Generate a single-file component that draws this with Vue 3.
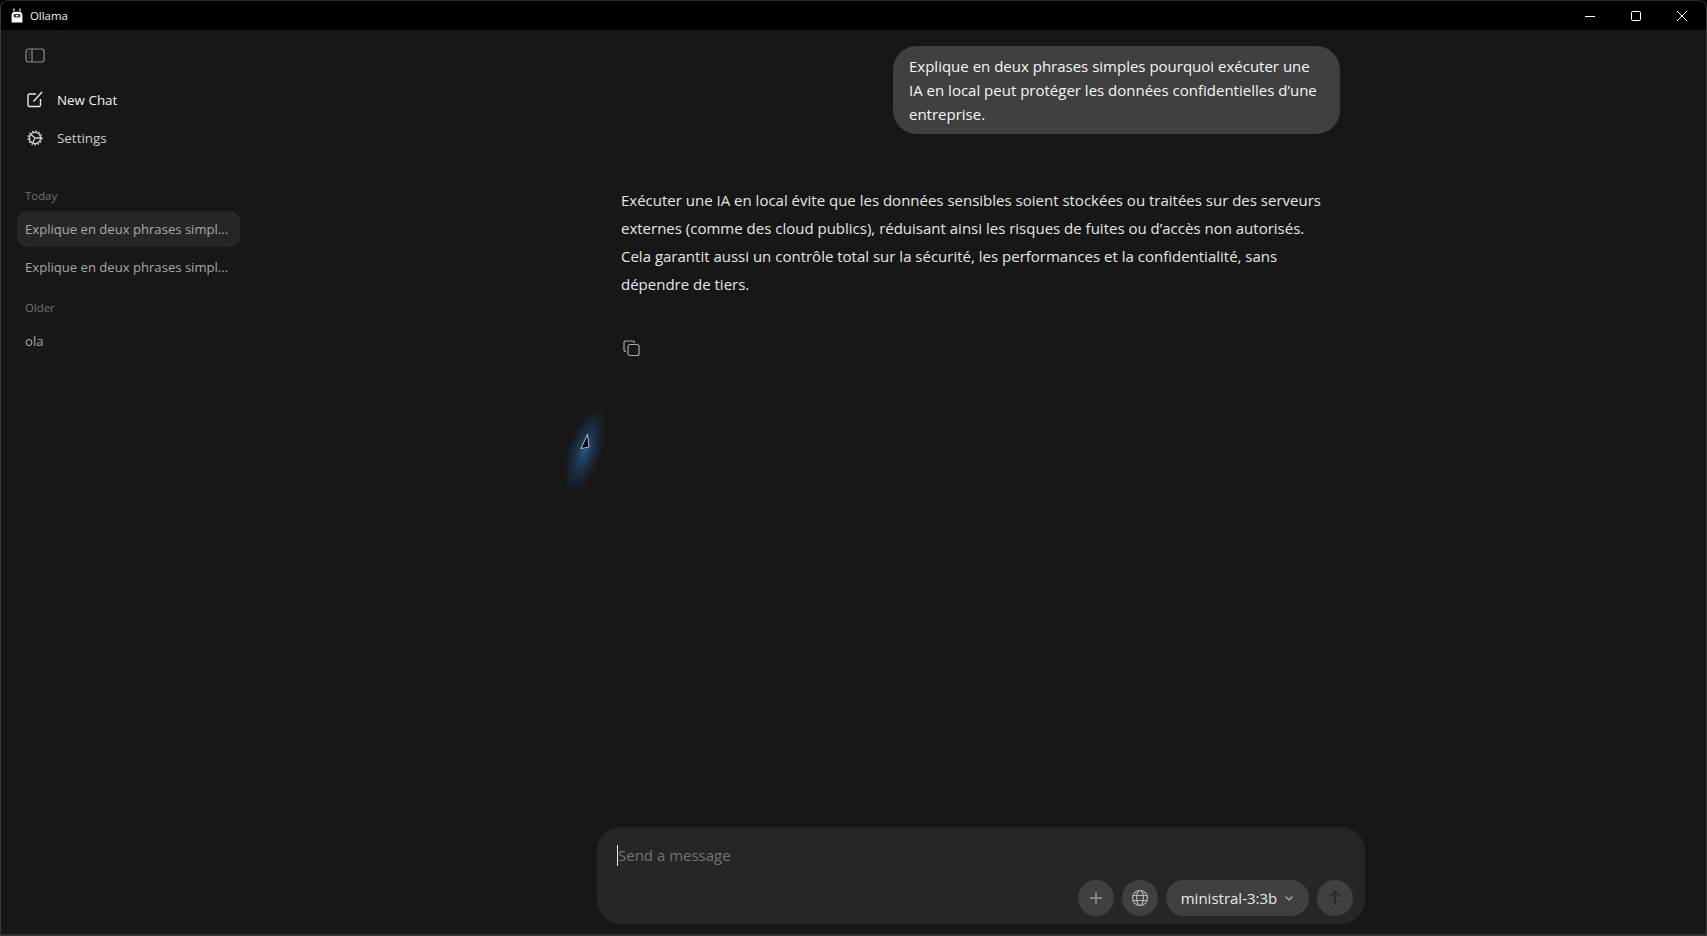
<script setup>
const history = [
  { label: 'Today', items: [
    { title: 'Explique en deux phrases simpl...', active: true },
    { title: 'Explique en deux phrases simpl...', active: false }
  ] },
  { label: 'Older', items: [{ title: 'ola', active: false }] }
];
</script>

<template>
  <div class="window">
    <header class="titlebar">
      <div class="app-name">
        <svg class="llama" width="12" height="15" viewBox="0 0 12 15">
          <path d="M2.400 0.500H3.400L3.600 3H2.400ZM8.600 0.500H9.600V3H8.400Z" fill="#fff" />
          <path d="M2.200 3.800H9.800L10.600 5Q11.800 6.500 11.400 8V14.500H0.600V8Q0.200 6.500 1.400 5Z" fill="#fff" />
          <rect x="2.400" y="6" width="7.200" height="3.400" rx="1.600" fill="#333" />
          <rect x="4.800" y="7" width="2.400" height="1.400" fill="#fff" />
        </svg>
        <span>Ollama</span>
      </div>
      <div class="win-controls">
        <svg width="10" height="10" viewBox="0 0 10 10"><path d="M0 5.500H10" stroke="#fff" stroke-width="1" /></svg>
        <svg width="10" height="10" viewBox="0 0 10 10"><rect x="0.500" y="0.500" width="9" height="9" rx="1" fill="none" stroke="#fff" stroke-width="1" /></svg>
        <svg width="10" height="10" viewBox="0 0 10 10"><path d="M0 0L10 10M10 0L0 10" stroke="#fff" stroke-width="1" /></svg>
      </div>
    </header>

    <div class="body">
      <aside class="sidebar">
        <button class="toggle">
          <svg width="20" height="15" viewBox="0 0 20 15" fill="none" stroke="#8e8e8e" stroke-width="1.200">
            <rect x="1" y="1" width="18" height="13" rx="2.500" />
            <path d="M7 1V14" />
            <path d="M3.600 4H4.600M3.600 7H4.600M3.600 10H4.600" />
          </svg>
        </button>
        <nav class="nav">
          <div class="nav-row new-chat">
            <svg width="18" height="18" viewBox="0 0 18 18" fill="none" stroke="#e8e8e8" stroke-width="1.400">
              <path d="M10 3H3.500A1.500 1.500 0 0 0 2 4.500V14A1.500 1.500 0 0 0 3.500 15.500H13A1.500 1.500 0 0 0 14.500 14V8" />
              <path d="M7.500 10.500L16 1" />
            </svg>
            <span>New Chat</span>
          </div>
          <div class="nav-row settings">
            <svg width="18" height="18" viewBox="0 0 18 18" fill="none" stroke="#cfcfcf" stroke-width="1.300">
              <circle cx="9" cy="9" r="5.600" />
              <circle cx="9" cy="9" r="6.800" stroke-dasharray="1.600 1.600" stroke-width="1.400" />
              <path d="M9 9L5 5.500M9 9L14 9M9 9L6.500 14" />
            </svg>
            <span>Settings</span>
          </div>
        </nav>
        <section v-for="group in history" :key="group.label" class="group">
          <div class="group-label">{{ group.label }}</div>
          <div v-for="(item, i) in group.items" :key="i" class="chat-item" :class="{ active: item.active }">
            <span class="chat-title">{{ item.title }}</span>
          </div>
        </section>
      </aside>

      <main class="main">
        <div class="thread">
          <div class="user-row">
            <div class="bubble">Explique en deux phrases simples pourquoi exécuter une IA en local peut protéger les données confidentielles d’une entreprise.</div>
          </div>
          <p class="answer">Exécuter une IA en local évite que les données sensibles soient stockées ou traitées sur des serveurs externes (comme des cloud publics), réduisant ainsi les risques de fuites ou d’accès non autorisés. Cela garantit aussi un contrôle total sur la sécurité, les performances et la confidentialité, sans dépendre de tiers.</p>
          <svg class="copy" width="17" height="17" viewBox="0 0 17 17" fill="none" stroke="#a8a8a8" stroke-width="1.200">
            <path d="M3 11.500H2.800A1.800 1.800 0 0 1 1 9.700V2.800A1.800 1.800 0 0 1 2.800 1H9.700A1.800 1.800 0 0 1 11.500 2.800V3" />
            <rect x="5" y="4.500" width="11" height="11" rx="2" />
          </svg>
        </div>

        <div class="composer">
          <div class="input-line"><span class="caret"></span><span class="placeholder">Send a message</span></div>
          <div class="actions">
            <button class="round">
              <svg width="14" height="14" viewBox="0 0 14 14"><path d="M7 1V13M1 7H13" stroke="#9a9a9a" stroke-width="1.400" /></svg>
            </button>
            <button class="round">
              <svg width="18" height="18" viewBox="0 0 18 18" fill="none" stroke="#b4b4b4" stroke-width="1.200">
                <circle cx="9" cy="9" r="7.500" />
                <ellipse cx="9" cy="9" rx="3.400" ry="7.500" />
                <path d="M2 6.500H16M2 11.500H16" />
              </svg>
            </button>
            <button class="model">
              <span>ministral-3:3b</span>
              <svg width="10" height="7" viewBox="0 0 10 7" fill="none" stroke="#b4b4b4" stroke-width="1.100"><path d="M1.500 1.500L5 5L8.500 1.500" /></svg>
            </button>
            <button class="round send">
              <svg width="14" height="16" viewBox="0 0 14 16" fill="none" stroke="#262626" stroke-width="1.500"><path d="M7 15V1.500M2 6.500L7 1.500L12 6.500" /></svg>
            </button>
          </div>
        </div>
      </main>
    </div>

    <!-- mouse pointer highlight from the screen recorder -->
    <div class="pointer">
      <div class="glow"></div>
      <svg class="arrow" width="10" height="16" viewBox="0 0 10 16"><path d="M7.500 0.500L9 13L1 14.500Z" fill="#000" stroke="#dfe8f2" stroke-width="0.800" /></svg>
    </div>
  </div>
</template>

<style>
html, body { margin: 0; background: #000; }
</style>

<style scoped>
.window {
  position: relative;
  width: 1707px;
  height: 936px;
  box-sizing: border-box;
  display: flex;
  flex-direction: column;
  overflow: hidden;
  background: #171717;
  border: 1px solid #3a3a3a;
  border-top-color: #2a2a2a;
  border-bottom: 2px solid #333;
  border-radius: 8px 8px 0 0;
  font-family: "Open Sans", "Noto Sans", sans-serif;
  color: #e8e8e8;
}
.titlebar {
  flex: none;
  height: 29px;
  background: #000;
  display: flex;
  align-items: center;
  justify-content: space-between;
}
.app-name {
  display: flex;
  align-items: center;
  gap: 7px;
  padding-left: 10px;
  font-size: 11.400px;
  color: #f0f0f0;
}
.win-controls {
  display: flex;
  gap: 36px;
  padding-right: 19px;
}
.win-controls svg { display: block; }
.body {
  flex: 1;
  display: flex;
  min-height: 0;
}
.sidebar {
  flex: none;
  width: 255px;
  box-sizing: border-box;
  padding: 18px 16px 0;
}
.toggle {
  display: block;
  padding: 0;
  margin-left: 8px;
  height: 15px;
  background: none;
  border: none;
}
.nav { margin-top: 18px; }
.nav-row {
  display: flex;
  align-items: center;
  gap: 13px;
  height: 38px;
  padding-left: 9px;
  font-size: 13.400px;
}
.new-chat { color: #f2f2f2; font-weight: 500; }
.settings { color: #cdcdcd; }
.nav + .group { margin-top: 30px; }
.group-label {
  padding: 0 8px;
  height: 18px;
  line-height: 18px;
  font-size: 11.400px;
  color: #737373;
}
.chat-item {
  width: 223px;
  height: 36px;
  box-sizing: border-box;
  padding: 0 11px 0 8px;
  margin-bottom: 2px;
  display: flex;
  align-items: center;
  border-radius: 10px;
  font-size: 13.100px;
  color: #a8a8a8;
}
.chat-item.active { background: #262626; }
.group-label + .chat-item { margin-top: 6px; }
.chat-title {
  white-space: nowrap;
}
.group + .group { margin-top: 14px; }
.main {
  flex: 1;
  min-width: 0;
  display: flex;
  flex-direction: column;
  align-items: center;
  padding-bottom: 10px;
}
.thread {
  flex: 1;
  width: 768px;
  box-sizing: border-box;
  padding: 16px 25px 0 24px;
}
.user-row {
  display: flex;
  justify-content: flex-end;
}
.bubble {
  width: 447px;
  box-sizing: border-box;
  padding: 8px 16px;
  background: #404040;
  border-radius: 24px;
  font-size: 15px;
  line-height: 24px;
  color: #f5f5f5;
}
.answer {
  margin: 52px 0 0;
  padding-right: 10px;
  font-size: 15px;
  line-height: 28px;
  color: #e5e5e5;
}
.copy {
  display: block;
  margin: 42px 0 0 2px;
}
.composer {
  flex: none;
  width: 768px;
  height: 97px;
  box-sizing: border-box;
  padding: 16px 12px 8px 20px;
  background: #262626;
  border-radius: 24px;
  display: flex;
  flex-direction: column;
  justify-content: space-between;
}
.input-line {
  display: flex;
  align-items: center;
  height: 24px;
}
.caret {
  width: 1px;
  height: 21px;
  background: #e8e8e8;
}
.placeholder {
  font-size: 15px;
  color: #737373;
}
.actions {
  display: flex;
  justify-content: flex-end;
  gap: 8px;
}
.round {
  width: 36px;
  height: 36px;
  padding: 0;
  border: none;
  border-radius: 50%;
  background: #404040;
  display: flex;
  align-items: center;
  justify-content: center;
}
.model {
  width: 143px;
  height: 36px;
  padding: 0;
  border: none;
  border-radius: 18px;
  background: #404040;
  display: flex;
  align-items: center;
  justify-content: center;
  gap: 7px;
  font-family: inherit;
  font-size: 15px;
  color: #e8e8e8;
}
.pointer {
  position: absolute;
  left: 555px;
  top: 400px;
  width: 60px;
  height: 100px;
}
.glow {
  position: absolute;
  left: 12px;
  top: 5px;
  width: 34px;
  height: 88px;
  border-radius: 50%;
  background: radial-gradient(closest-side, rgba(38, 100, 160, 0.8), rgba(30, 80, 130, 0.35) 55%, rgba(23, 23, 23, 0));
  transform: rotate(18deg);
}
.arrow {
  position: absolute;
  left: 24px;
  top: 33px;
}
</style>
